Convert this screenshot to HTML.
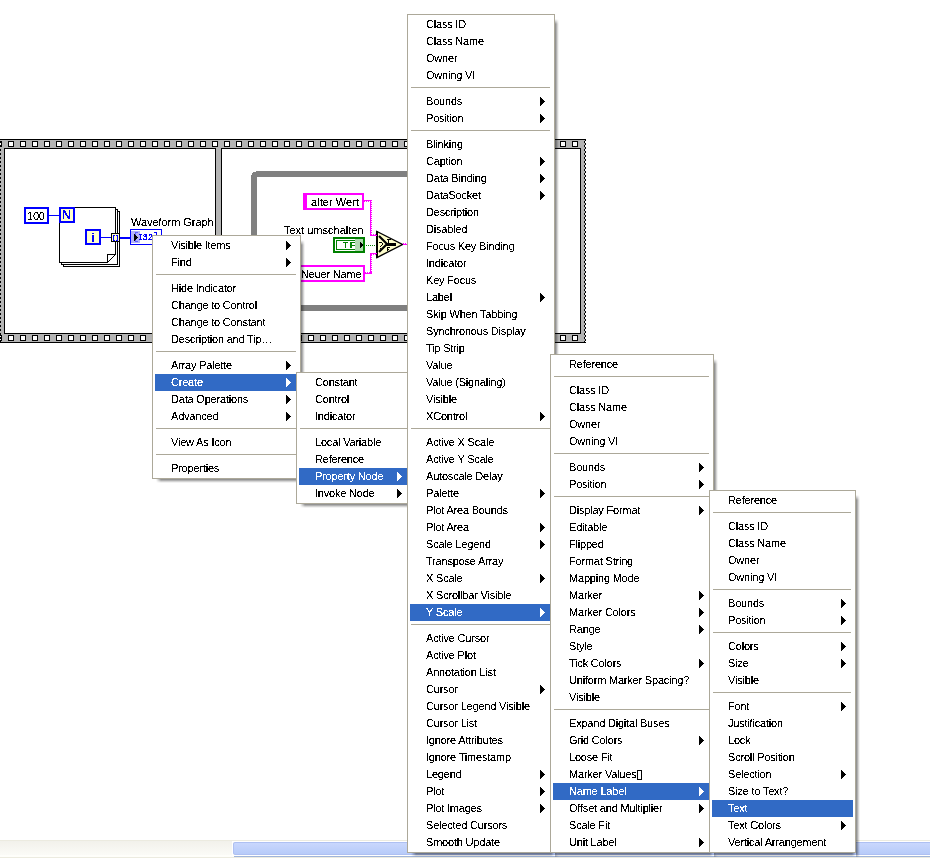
<!DOCTYPE html>
<html><head><meta charset="utf-8"><style>
html,body{margin:0;padding:0}
body{width:930px;height:858px;position:relative;overflow:hidden;background:#fff;font-family:"Liberation Sans",sans-serif;font-size:11px;color:#000}
.m{will-change:transform;position:absolute;box-sizing:border-box;background:#fff;border:1px solid #aca899;padding:1px 2px}
.i{position:relative;height:17px;line-height:17px;padding-left:16px;white-space:nowrap;letter-spacing:-0.2px}
.i.h{background:#316ac5;color:#fff}
.i b{position:absolute;right:7px;top:4px;width:5px;height:9px;color:#000;background:linear-gradient(currentColor,currentColor) 0 0/1px 9px no-repeat,linear-gradient(currentColor,currentColor) 1px 1px/1px 7px no-repeat,linear-gradient(currentColor,currentColor) 2px 2px/1px 5px no-repeat,linear-gradient(currentColor,currentColor) 3px 3px/1px 3px no-repeat,linear-gradient(currentColor,currentColor) 4px 4px/1px 1px no-repeat}
.i.h b{color:#fff}
.s{height:9px;position:relative}
.s:after{content:"";position:absolute;left:1px;right:2px;top:3px;height:1px;background:#aca899}
.sr{position:absolute;left:100%;top:4px;bottom:-5px;width:4px;margin-left:1px;background:linear-gradient(to right,rgba(0,0,0,.48),rgba(0,0,0,.32) 35%,rgba(0,0,0,.12) 70%,rgba(0,0,0,0));-webkit-mask-image:linear-gradient(to bottom,transparent,#000 5px,#000 calc(100% - 4px),rgba(0,0,0,.3))}
.sb{position:absolute;top:100%;left:3px;right:-1px;height:4px;margin-top:1px;background:linear-gradient(to bottom,rgba(0,0,0,.48),rgba(0,0,0,.32) 35%,rgba(0,0,0,.12) 70%,rgba(0,0,0,0));-webkit-mask-image:linear-gradient(to right,transparent,#000 5px,#000 calc(100% - 4px),transparent)}
.t{filter:url(#cr);position:absolute;line-height:17px;white-space:nowrap;letter-spacing:-0.2px}
.b{font-weight:bold}
.sc{position:absolute;left:0;top:840px;width:930px;height:18px;background:linear-gradient(to bottom,#ecebe0 0,#ecebe0 1px,#f2f1eb 1px,#fbfbf7 15px,#fefefa 15px,#fefefa 17px,#ecebe0 17px)}
.th{position:absolute;left:232px;top:1px;right:-3px;height:15px;border:1px solid #fff;border-right:0;box-sizing:border-box}
.th:before{content:"";position:absolute;left:0;top:0;right:0;bottom:0;border-radius:2px;background:linear-gradient(to bottom,#c9d7fd,#b7cbf9);border:1px solid #aec0f2}
.th:after{content:"";position:absolute;left:1px;right:0;top:14px;height:1px;background:#9fb4da}

.i span{filter:url(#cr)}

</style></head><body>
<svg width="0" height="0" style="position:absolute"><defs><filter id="cr" x="-5%" y="-20%" width="110%" height="140%"><feComponentTransfer><feFuncA type="discrete" tableValues="0 0 0 0 1 1 1 1 1"/></feComponentTransfer></filter></defs></svg>
<svg style="position:absolute;left:0;top:0" width="930" height="858" shape-rendering="crispEdges"><rect x="0" y="139" width="586" height="1" fill="#000"/><rect x="0" y="140" width="585" height="8" fill="#b4b4b4"/><rect x="0" y="342" width="586" height="1" fill="#000"/><rect x="0" y="334" width="585" height="8" fill="#b4b4b4"/><rect x="0" y="141" width="2" height="6" fill="#000"/><rect x="0" y="142" width="1" height="4" fill="#fff"/><rect x="0" y="335" width="2" height="6" fill="#000"/><rect x="0" y="336" width="1" height="4" fill="#fff"/><rect x="8" y="141" width="6" height="6" fill="#000"/><rect x="9" y="142" width="4" height="4" fill="#fff"/><rect x="8" y="335" width="6" height="6" fill="#000"/><rect x="9" y="336" width="4" height="4" fill="#fff"/><rect x="20" y="141" width="6" height="6" fill="#000"/><rect x="21" y="142" width="4" height="4" fill="#fff"/><rect x="20" y="335" width="6" height="6" fill="#000"/><rect x="21" y="336" width="4" height="4" fill="#fff"/><rect x="32" y="141" width="6" height="6" fill="#000"/><rect x="33" y="142" width="4" height="4" fill="#fff"/><rect x="32" y="335" width="6" height="6" fill="#000"/><rect x="33" y="336" width="4" height="4" fill="#fff"/><rect x="44" y="141" width="6" height="6" fill="#000"/><rect x="45" y="142" width="4" height="4" fill="#fff"/><rect x="44" y="335" width="6" height="6" fill="#000"/><rect x="45" y="336" width="4" height="4" fill="#fff"/><rect x="56" y="141" width="6" height="6" fill="#000"/><rect x="57" y="142" width="4" height="4" fill="#fff"/><rect x="56" y="335" width="6" height="6" fill="#000"/><rect x="57" y="336" width="4" height="4" fill="#fff"/><rect x="68" y="141" width="6" height="6" fill="#000"/><rect x="69" y="142" width="4" height="4" fill="#fff"/><rect x="68" y="335" width="6" height="6" fill="#000"/><rect x="69" y="336" width="4" height="4" fill="#fff"/><rect x="80" y="141" width="6" height="6" fill="#000"/><rect x="81" y="142" width="4" height="4" fill="#fff"/><rect x="80" y="335" width="6" height="6" fill="#000"/><rect x="81" y="336" width="4" height="4" fill="#fff"/><rect x="92" y="141" width="6" height="6" fill="#000"/><rect x="93" y="142" width="4" height="4" fill="#fff"/><rect x="92" y="335" width="6" height="6" fill="#000"/><rect x="93" y="336" width="4" height="4" fill="#fff"/><rect x="104" y="141" width="6" height="6" fill="#000"/><rect x="105" y="142" width="4" height="4" fill="#fff"/><rect x="104" y="335" width="6" height="6" fill="#000"/><rect x="105" y="336" width="4" height="4" fill="#fff"/><rect x="116" y="141" width="6" height="6" fill="#000"/><rect x="117" y="142" width="4" height="4" fill="#fff"/><rect x="116" y="335" width="6" height="6" fill="#000"/><rect x="117" y="336" width="4" height="4" fill="#fff"/><rect x="128" y="141" width="6" height="6" fill="#000"/><rect x="129" y="142" width="4" height="4" fill="#fff"/><rect x="128" y="335" width="6" height="6" fill="#000"/><rect x="129" y="336" width="4" height="4" fill="#fff"/><rect x="140" y="141" width="6" height="6" fill="#000"/><rect x="141" y="142" width="4" height="4" fill="#fff"/><rect x="140" y="335" width="6" height="6" fill="#000"/><rect x="141" y="336" width="4" height="4" fill="#fff"/><rect x="152" y="141" width="6" height="6" fill="#000"/><rect x="153" y="142" width="4" height="4" fill="#fff"/><rect x="152" y="335" width="6" height="6" fill="#000"/><rect x="153" y="336" width="4" height="4" fill="#fff"/><rect x="164" y="141" width="6" height="6" fill="#000"/><rect x="165" y="142" width="4" height="4" fill="#fff"/><rect x="164" y="335" width="6" height="6" fill="#000"/><rect x="165" y="336" width="4" height="4" fill="#fff"/><rect x="176" y="141" width="6" height="6" fill="#000"/><rect x="177" y="142" width="4" height="4" fill="#fff"/><rect x="176" y="335" width="6" height="6" fill="#000"/><rect x="177" y="336" width="4" height="4" fill="#fff"/><rect x="188" y="141" width="6" height="6" fill="#000"/><rect x="189" y="142" width="4" height="4" fill="#fff"/><rect x="188" y="335" width="6" height="6" fill="#000"/><rect x="189" y="336" width="4" height="4" fill="#fff"/><rect x="200" y="141" width="6" height="6" fill="#000"/><rect x="201" y="142" width="4" height="4" fill="#fff"/><rect x="200" y="335" width="6" height="6" fill="#000"/><rect x="201" y="336" width="4" height="4" fill="#fff"/><rect x="212" y="141" width="6" height="6" fill="#000"/><rect x="213" y="142" width="4" height="4" fill="#fff"/><rect x="212" y="335" width="6" height="6" fill="#000"/><rect x="213" y="336" width="4" height="4" fill="#fff"/><rect x="224" y="141" width="6" height="6" fill="#000"/><rect x="225" y="142" width="4" height="4" fill="#fff"/><rect x="224" y="335" width="6" height="6" fill="#000"/><rect x="225" y="336" width="4" height="4" fill="#fff"/><rect x="236" y="141" width="6" height="6" fill="#000"/><rect x="237" y="142" width="4" height="4" fill="#fff"/><rect x="236" y="335" width="6" height="6" fill="#000"/><rect x="237" y="336" width="4" height="4" fill="#fff"/><rect x="248" y="141" width="6" height="6" fill="#000"/><rect x="249" y="142" width="4" height="4" fill="#fff"/><rect x="248" y="335" width="6" height="6" fill="#000"/><rect x="249" y="336" width="4" height="4" fill="#fff"/><rect x="260" y="141" width="6" height="6" fill="#000"/><rect x="261" y="142" width="4" height="4" fill="#fff"/><rect x="260" y="335" width="6" height="6" fill="#000"/><rect x="261" y="336" width="4" height="4" fill="#fff"/><rect x="272" y="141" width="6" height="6" fill="#000"/><rect x="273" y="142" width="4" height="4" fill="#fff"/><rect x="272" y="335" width="6" height="6" fill="#000"/><rect x="273" y="336" width="4" height="4" fill="#fff"/><rect x="284" y="141" width="6" height="6" fill="#000"/><rect x="285" y="142" width="4" height="4" fill="#fff"/><rect x="284" y="335" width="6" height="6" fill="#000"/><rect x="285" y="336" width="4" height="4" fill="#fff"/><rect x="296" y="141" width="6" height="6" fill="#000"/><rect x="297" y="142" width="4" height="4" fill="#fff"/><rect x="296" y="335" width="6" height="6" fill="#000"/><rect x="297" y="336" width="4" height="4" fill="#fff"/><rect x="308" y="141" width="6" height="6" fill="#000"/><rect x="309" y="142" width="4" height="4" fill="#fff"/><rect x="308" y="335" width="6" height="6" fill="#000"/><rect x="309" y="336" width="4" height="4" fill="#fff"/><rect x="320" y="141" width="6" height="6" fill="#000"/><rect x="321" y="142" width="4" height="4" fill="#fff"/><rect x="320" y="335" width="6" height="6" fill="#000"/><rect x="321" y="336" width="4" height="4" fill="#fff"/><rect x="332" y="141" width="6" height="6" fill="#000"/><rect x="333" y="142" width="4" height="4" fill="#fff"/><rect x="332" y="335" width="6" height="6" fill="#000"/><rect x="333" y="336" width="4" height="4" fill="#fff"/><rect x="344" y="141" width="6" height="6" fill="#000"/><rect x="345" y="142" width="4" height="4" fill="#fff"/><rect x="344" y="335" width="6" height="6" fill="#000"/><rect x="345" y="336" width="4" height="4" fill="#fff"/><rect x="356" y="141" width="6" height="6" fill="#000"/><rect x="357" y="142" width="4" height="4" fill="#fff"/><rect x="356" y="335" width="6" height="6" fill="#000"/><rect x="357" y="336" width="4" height="4" fill="#fff"/><rect x="368" y="141" width="6" height="6" fill="#000"/><rect x="369" y="142" width="4" height="4" fill="#fff"/><rect x="368" y="335" width="6" height="6" fill="#000"/><rect x="369" y="336" width="4" height="4" fill="#fff"/><rect x="380" y="141" width="6" height="6" fill="#000"/><rect x="381" y="142" width="4" height="4" fill="#fff"/><rect x="380" y="335" width="6" height="6" fill="#000"/><rect x="381" y="336" width="4" height="4" fill="#fff"/><rect x="392" y="141" width="6" height="6" fill="#000"/><rect x="393" y="142" width="4" height="4" fill="#fff"/><rect x="392" y="335" width="6" height="6" fill="#000"/><rect x="393" y="336" width="4" height="4" fill="#fff"/><rect x="404" y="141" width="6" height="6" fill="#000"/><rect x="405" y="142" width="4" height="4" fill="#fff"/><rect x="404" y="335" width="6" height="6" fill="#000"/><rect x="405" y="336" width="4" height="4" fill="#fff"/><rect x="416" y="141" width="6" height="6" fill="#000"/><rect x="417" y="142" width="4" height="4" fill="#fff"/><rect x="416" y="335" width="6" height="6" fill="#000"/><rect x="417" y="336" width="4" height="4" fill="#fff"/><rect x="428" y="141" width="6" height="6" fill="#000"/><rect x="429" y="142" width="4" height="4" fill="#fff"/><rect x="428" y="335" width="6" height="6" fill="#000"/><rect x="429" y="336" width="4" height="4" fill="#fff"/><rect x="440" y="141" width="6" height="6" fill="#000"/><rect x="441" y="142" width="4" height="4" fill="#fff"/><rect x="440" y="335" width="6" height="6" fill="#000"/><rect x="441" y="336" width="4" height="4" fill="#fff"/><rect x="452" y="141" width="6" height="6" fill="#000"/><rect x="453" y="142" width="4" height="4" fill="#fff"/><rect x="452" y="335" width="6" height="6" fill="#000"/><rect x="453" y="336" width="4" height="4" fill="#fff"/><rect x="464" y="141" width="6" height="6" fill="#000"/><rect x="465" y="142" width="4" height="4" fill="#fff"/><rect x="464" y="335" width="6" height="6" fill="#000"/><rect x="465" y="336" width="4" height="4" fill="#fff"/><rect x="476" y="141" width="6" height="6" fill="#000"/><rect x="477" y="142" width="4" height="4" fill="#fff"/><rect x="476" y="335" width="6" height="6" fill="#000"/><rect x="477" y="336" width="4" height="4" fill="#fff"/><rect x="488" y="141" width="6" height="6" fill="#000"/><rect x="489" y="142" width="4" height="4" fill="#fff"/><rect x="488" y="335" width="6" height="6" fill="#000"/><rect x="489" y="336" width="4" height="4" fill="#fff"/><rect x="500" y="141" width="6" height="6" fill="#000"/><rect x="501" y="142" width="4" height="4" fill="#fff"/><rect x="500" y="335" width="6" height="6" fill="#000"/><rect x="501" y="336" width="4" height="4" fill="#fff"/><rect x="512" y="141" width="6" height="6" fill="#000"/><rect x="513" y="142" width="4" height="4" fill="#fff"/><rect x="512" y="335" width="6" height="6" fill="#000"/><rect x="513" y="336" width="4" height="4" fill="#fff"/><rect x="524" y="141" width="6" height="6" fill="#000"/><rect x="525" y="142" width="4" height="4" fill="#fff"/><rect x="524" y="335" width="6" height="6" fill="#000"/><rect x="525" y="336" width="4" height="4" fill="#fff"/><rect x="536" y="141" width="6" height="6" fill="#000"/><rect x="537" y="142" width="4" height="4" fill="#fff"/><rect x="536" y="335" width="6" height="6" fill="#000"/><rect x="537" y="336" width="4" height="4" fill="#fff"/><rect x="548" y="141" width="6" height="6" fill="#000"/><rect x="549" y="142" width="4" height="4" fill="#fff"/><rect x="548" y="335" width="6" height="6" fill="#000"/><rect x="549" y="336" width="4" height="4" fill="#fff"/><rect x="560" y="141" width="6" height="6" fill="#000"/><rect x="561" y="142" width="4" height="4" fill="#fff"/><rect x="560" y="335" width="6" height="6" fill="#000"/><rect x="561" y="336" width="4" height="4" fill="#fff"/><rect x="572" y="141" width="6" height="6" fill="#000"/><rect x="573" y="142" width="4" height="4" fill="#fff"/><rect x="572" y="335" width="6" height="6" fill="#000"/><rect x="573" y="336" width="4" height="4" fill="#fff"/><rect x="0" y="148" width="4" height="186" fill="#b4b4b4"/><rect x="0" y="141" width="1" height="2" fill="#000"/><rect x="0" y="145" width="1" height="2" fill="#000"/><rect x="0" y="149" width="1" height="2" fill="#000"/><rect x="0" y="153" width="1" height="2" fill="#000"/><rect x="0" y="157" width="1" height="2" fill="#000"/><rect x="0" y="161" width="1" height="2" fill="#000"/><rect x="0" y="165" width="1" height="2" fill="#000"/><rect x="0" y="169" width="1" height="2" fill="#000"/><rect x="0" y="173" width="1" height="2" fill="#000"/><rect x="0" y="177" width="1" height="2" fill="#000"/><rect x="0" y="181" width="1" height="2" fill="#000"/><rect x="0" y="185" width="1" height="2" fill="#000"/><rect x="0" y="189" width="1" height="2" fill="#000"/><rect x="0" y="193" width="1" height="2" fill="#000"/><rect x="0" y="197" width="1" height="2" fill="#000"/><rect x="0" y="201" width="1" height="2" fill="#000"/><rect x="0" y="205" width="1" height="2" fill="#000"/><rect x="0" y="209" width="1" height="2" fill="#000"/><rect x="0" y="213" width="1" height="2" fill="#000"/><rect x="0" y="217" width="1" height="2" fill="#000"/><rect x="0" y="221" width="1" height="2" fill="#000"/><rect x="0" y="225" width="1" height="2" fill="#000"/><rect x="0" y="229" width="1" height="2" fill="#000"/><rect x="0" y="233" width="1" height="2" fill="#000"/><rect x="0" y="237" width="1" height="2" fill="#000"/><rect x="0" y="241" width="1" height="2" fill="#000"/><rect x="0" y="245" width="1" height="2" fill="#000"/><rect x="0" y="249" width="1" height="2" fill="#000"/><rect x="0" y="253" width="1" height="2" fill="#000"/><rect x="0" y="257" width="1" height="2" fill="#000"/><rect x="0" y="261" width="1" height="2" fill="#000"/><rect x="0" y="265" width="1" height="2" fill="#000"/><rect x="0" y="269" width="1" height="2" fill="#000"/><rect x="0" y="273" width="1" height="2" fill="#000"/><rect x="0" y="277" width="1" height="2" fill="#000"/><rect x="0" y="281" width="1" height="2" fill="#000"/><rect x="0" y="285" width="1" height="2" fill="#000"/><rect x="0" y="289" width="1" height="2" fill="#000"/><rect x="0" y="293" width="1" height="2" fill="#000"/><rect x="0" y="297" width="1" height="2" fill="#000"/><rect x="0" y="301" width="1" height="2" fill="#000"/><rect x="0" y="305" width="1" height="2" fill="#000"/><rect x="0" y="309" width="1" height="2" fill="#000"/><rect x="0" y="313" width="1" height="2" fill="#000"/><rect x="0" y="317" width="1" height="2" fill="#000"/><rect x="0" y="321" width="1" height="2" fill="#000"/><rect x="0" y="325" width="1" height="2" fill="#000"/><rect x="0" y="329" width="1" height="2" fill="#000"/><rect x="0" y="333" width="1" height="2" fill="#000"/><rect x="0" y="337" width="1" height="2" fill="#000"/><rect x="0" y="341" width="1" height="2" fill="#000"/><rect x="581" y="148" width="4" height="186" fill="#b4b4b4"/><rect x="585" y="139" width="1" height="2" fill="#000"/><rect x="584" y="141" width="1" height="2" fill="#000"/><rect x="585" y="143" width="1" height="2" fill="#000"/><rect x="584" y="145" width="1" height="2" fill="#000"/><rect x="585" y="147" width="1" height="2" fill="#000"/><rect x="584" y="149" width="1" height="2" fill="#000"/><rect x="585" y="151" width="1" height="2" fill="#000"/><rect x="584" y="153" width="1" height="2" fill="#000"/><rect x="585" y="155" width="1" height="2" fill="#000"/><rect x="584" y="157" width="1" height="2" fill="#000"/><rect x="585" y="159" width="1" height="2" fill="#000"/><rect x="584" y="161" width="1" height="2" fill="#000"/><rect x="585" y="163" width="1" height="2" fill="#000"/><rect x="584" y="165" width="1" height="2" fill="#000"/><rect x="585" y="167" width="1" height="2" fill="#000"/><rect x="584" y="169" width="1" height="2" fill="#000"/><rect x="585" y="171" width="1" height="2" fill="#000"/><rect x="584" y="173" width="1" height="2" fill="#000"/><rect x="585" y="175" width="1" height="2" fill="#000"/><rect x="584" y="177" width="1" height="2" fill="#000"/><rect x="585" y="179" width="1" height="2" fill="#000"/><rect x="584" y="181" width="1" height="2" fill="#000"/><rect x="585" y="183" width="1" height="2" fill="#000"/><rect x="584" y="185" width="1" height="2" fill="#000"/><rect x="585" y="187" width="1" height="2" fill="#000"/><rect x="584" y="189" width="1" height="2" fill="#000"/><rect x="585" y="191" width="1" height="2" fill="#000"/><rect x="584" y="193" width="1" height="2" fill="#000"/><rect x="585" y="195" width="1" height="2" fill="#000"/><rect x="584" y="197" width="1" height="2" fill="#000"/><rect x="585" y="199" width="1" height="2" fill="#000"/><rect x="584" y="201" width="1" height="2" fill="#000"/><rect x="585" y="203" width="1" height="2" fill="#000"/><rect x="584" y="205" width="1" height="2" fill="#000"/><rect x="585" y="207" width="1" height="2" fill="#000"/><rect x="584" y="209" width="1" height="2" fill="#000"/><rect x="585" y="211" width="1" height="2" fill="#000"/><rect x="584" y="213" width="1" height="2" fill="#000"/><rect x="585" y="215" width="1" height="2" fill="#000"/><rect x="584" y="217" width="1" height="2" fill="#000"/><rect x="585" y="219" width="1" height="2" fill="#000"/><rect x="584" y="221" width="1" height="2" fill="#000"/><rect x="585" y="223" width="1" height="2" fill="#000"/><rect x="584" y="225" width="1" height="2" fill="#000"/><rect x="585" y="227" width="1" height="2" fill="#000"/><rect x="584" y="229" width="1" height="2" fill="#000"/><rect x="585" y="231" width="1" height="2" fill="#000"/><rect x="584" y="233" width="1" height="2" fill="#000"/><rect x="585" y="235" width="1" height="2" fill="#000"/><rect x="584" y="237" width="1" height="2" fill="#000"/><rect x="585" y="239" width="1" height="2" fill="#000"/><rect x="584" y="241" width="1" height="2" fill="#000"/><rect x="585" y="243" width="1" height="2" fill="#000"/><rect x="584" y="245" width="1" height="2" fill="#000"/><rect x="585" y="247" width="1" height="2" fill="#000"/><rect x="584" y="249" width="1" height="2" fill="#000"/><rect x="585" y="251" width="1" height="2" fill="#000"/><rect x="584" y="253" width="1" height="2" fill="#000"/><rect x="585" y="255" width="1" height="2" fill="#000"/><rect x="584" y="257" width="1" height="2" fill="#000"/><rect x="585" y="259" width="1" height="2" fill="#000"/><rect x="584" y="261" width="1" height="2" fill="#000"/><rect x="585" y="263" width="1" height="2" fill="#000"/><rect x="584" y="265" width="1" height="2" fill="#000"/><rect x="585" y="267" width="1" height="2" fill="#000"/><rect x="584" y="269" width="1" height="2" fill="#000"/><rect x="585" y="271" width="1" height="2" fill="#000"/><rect x="584" y="273" width="1" height="2" fill="#000"/><rect x="585" y="275" width="1" height="2" fill="#000"/><rect x="584" y="277" width="1" height="2" fill="#000"/><rect x="585" y="279" width="1" height="2" fill="#000"/><rect x="584" y="281" width="1" height="2" fill="#000"/><rect x="585" y="283" width="1" height="2" fill="#000"/><rect x="584" y="285" width="1" height="2" fill="#000"/><rect x="585" y="287" width="1" height="2" fill="#000"/><rect x="584" y="289" width="1" height="2" fill="#000"/><rect x="585" y="291" width="1" height="2" fill="#000"/><rect x="584" y="293" width="1" height="2" fill="#000"/><rect x="585" y="295" width="1" height="2" fill="#000"/><rect x="584" y="297" width="1" height="2" fill="#000"/><rect x="585" y="299" width="1" height="2" fill="#000"/><rect x="584" y="301" width="1" height="2" fill="#000"/><rect x="585" y="303" width="1" height="2" fill="#000"/><rect x="584" y="305" width="1" height="2" fill="#000"/><rect x="585" y="307" width="1" height="2" fill="#000"/><rect x="584" y="309" width="1" height="2" fill="#000"/><rect x="585" y="311" width="1" height="2" fill="#000"/><rect x="584" y="313" width="1" height="2" fill="#000"/><rect x="585" y="315" width="1" height="2" fill="#000"/><rect x="584" y="317" width="1" height="2" fill="#000"/><rect x="585" y="319" width="1" height="2" fill="#000"/><rect x="584" y="321" width="1" height="2" fill="#000"/><rect x="585" y="323" width="1" height="2" fill="#000"/><rect x="584" y="325" width="1" height="2" fill="#000"/><rect x="585" y="327" width="1" height="2" fill="#000"/><rect x="584" y="329" width="1" height="2" fill="#000"/><rect x="585" y="331" width="1" height="2" fill="#000"/><rect x="584" y="333" width="1" height="2" fill="#000"/><rect x="585" y="335" width="1" height="2" fill="#000"/><rect x="584" y="337" width="1" height="2" fill="#000"/><rect x="585" y="339" width="1" height="2" fill="#000"/><rect x="584" y="341" width="1" height="2" fill="#000"/><rect x="4" y="148" width="212" height="1" fill="#000"/><rect x="221" y="148" width="360" height="1" fill="#000"/><rect x="4" y="333" width="212" height="1" fill="#000"/><rect x="221" y="333" width="360" height="1" fill="#000"/><rect x="4" y="148" width="1" height="186" fill="#000"/><rect x="580" y="148" width="1" height="186" fill="#000"/><rect x="215" y="148" width="1" height="186" fill="#000"/><rect x="216" y="148" width="5" height="186" fill="#b4b4b4"/><rect x="221" y="148" width="1" height="186" fill="#000"/><rect x="216" y="148" width="5" height="1" fill="#b4b4b4"/><rect x="216" y="333" width="5" height="1" fill="#b4b4b4"/><rect x="256" y="171" width="160" height="1" fill="#808080"/><rect x="253" y="172" width="163" height="1" fill="#808080"/><rect x="252" y="173" width="164" height="2" fill="#808080"/><rect x="251" y="175" width="165" height="2" fill="#808080"/><rect x="251" y="177" width="6" height="128" fill="#808080"/><rect x="251" y="305" width="165" height="6" fill="#808080"/><rect x="63" y="211" width="57" height="56" fill="#000"/><rect x="64" y="212" width="55" height="54" fill="#fff"/><rect x="61" y="209" width="57" height="56" fill="#000"/><rect x="62" y="210" width="55" height="54" fill="#fff"/><rect x="59" y="207" width="57" height="56" fill="#000"/><rect x="60" y="208" width="55" height="54" fill="#fff"/><rect x="108" y="254" width="8" height="9" fill="#fff"/><rect x="115" y="254" width="1" height="1" fill="#000"/><rect x="107" y="254" width="1" height="9" fill="#000"/><rect x="107" y="254" width="9" height="1" fill="#000"/><rect x="115" y="254" width="1" height="1" fill="#000"/><rect x="114" y="255" width="1" height="1" fill="#000"/><rect x="113" y="256" width="1" height="1" fill="#000"/><rect x="112" y="257" width="1" height="1" fill="#000"/><rect x="111" y="258" width="1" height="1" fill="#000"/><rect x="110" y="259" width="1" height="1" fill="#000"/><rect x="109" y="260" width="1" height="1" fill="#000"/><rect x="108" y="261" width="1" height="1" fill="#000"/><rect x="107" y="262" width="1" height="1" fill="#000"/><rect x="24" y="207" width="25" height="17" fill="#0000ff"/><rect x="26" y="209" width="21" height="13" fill="#fff"/><rect x="49" y="215" width="10" height="1" fill="#0000ff"/><rect x="59" y="207" width="16" height="16" fill="#0000ff"/><rect x="61" y="209" width="12" height="12" fill="#ffffcc"/><rect x="85" y="229" width="16" height="16" fill="#0000ff"/><rect x="87" y="231" width="12" height="12" fill="#ffffcc"/><rect x="101" y="237" width="10" height="1" fill="#0000ff"/><rect x="111" y="233" width="9" height="9" fill="#000"/><rect x="112" y="234" width="7" height="7" fill="#ffffcc"/><rect x="113" y="235" width="1" height="6" fill="#0000ff"/><rect x="113" y="235" width="2" height="1" fill="#0000ff"/><rect x="113" y="240" width="2" height="1" fill="#0000ff"/><rect x="117" y="235" width="1" height="6" fill="#0000ff"/><rect x="116" y="235" width="2" height="1" fill="#0000ff"/><rect x="116" y="240" width="2" height="1" fill="#0000ff"/><rect x="63" y="210" width="1" height="9" fill="#0000ff"/><rect x="69" y="210" width="1" height="9" fill="#0000ff"/><rect x="63" y="210" width="2" height="1" fill="#0000ff"/><rect x="64" y="211" width="2" height="1" fill="#0000ff"/><rect x="64" y="212" width="2" height="1" fill="#0000ff"/><rect x="65" y="213" width="2" height="1" fill="#0000ff"/><rect x="65" y="214" width="2" height="1" fill="#0000ff"/><rect x="66" y="215" width="2" height="1" fill="#0000ff"/><rect x="67" y="216" width="2" height="1" fill="#0000ff"/><rect x="67" y="217" width="2" height="1" fill="#0000ff"/><rect x="68" y="218" width="2" height="1" fill="#0000ff"/><rect x="92" y="233" width="2" height="1" fill="#0000ff"/><rect x="92" y="235" width="2" height="7" fill="#0000ff"/><rect x="120" y="237" width="10" height="2" fill="#0000ff"/><rect x="130" y="229" width="32" height="16" fill="#0000ff"/><rect x="131" y="230" width="30" height="14" fill="#fff"/><rect x="131" y="231" width="9" height="12" fill="#b4b4fa"/><rect x="135" y="232" width="1" height="10" fill="#6060ff"/><rect x="135" y="232" width="3" height="1" fill="#6060ff"/><rect x="135" y="241" width="3" height="1" fill="#6060ff"/><rect x="156" y="232" width="1" height="10" fill="#0000ff"/><rect x="154" y="232" width="3" height="1" fill="#0000ff"/><rect x="154" y="241" width="3" height="1" fill="#0000ff"/><rect x="134" y="234" width="1" height="7" fill="#000"/><rect x="135" y="235" width="1" height="5" fill="#000"/><rect x="136" y="236" width="1" height="3" fill="#000"/><rect x="137" y="237" width="1" height="1" fill="#000"/><rect x="139" y="234" width="3" height="1" fill="#0000ff"/><rect x="139" y="239" width="3" height="1" fill="#0000ff"/><rect x="140" y="234" width="1" height="6" fill="#0000ff"/><rect x="141" y="235" width="0" height="0" fill="#0000ff"/><rect x="303" y="193" width="61" height="17" fill="#ff00ff"/><rect x="307" y="195" width="55" height="13" fill="#fff"/><rect x="296" y="265" width="69" height="17" fill="#ff00ff"/><rect x="299" y="267" width="64" height="13" fill="#fff"/><rect x="333" y="237" width="32" height="16" fill="#008000"/><rect x="335" y="239" width="28" height="12" fill="#fff"/><rect x="336" y="240" width="26" height="10" fill="#008000"/><rect x="337" y="241" width="24" height="8" fill="#fff"/><rect x="355" y="239" width="8" height="12" fill="#b0d8b0"/><polygon points="360,242 363,245 360,248" fill="#000"/><rect x="366" y="245" width="1" height="1" fill="#008000"/><rect x="368" y="245" width="1" height="1" fill="#008000"/><rect x="370" y="245" width="1" height="1" fill="#008000"/><rect x="372" y="245" width="1" height="1" fill="#008000"/><rect x="374" y="245" width="1" height="1" fill="#008000"/><polygon points="377,231.5 402.5,244.5 377,257.5" fill="#ffffcc" stroke="#000" stroke-width="1.4" shape-rendering="geometricPrecision"/><rect x="376" y="231" width="2" height="27" fill="#000"/><path d="M379 236 L387 244 L379 252" stroke="#000" stroke-width="2.2" fill="none" shape-rendering="geometricPrecision"/><rect x="386" y="243" width="10" height="3" fill="#000"/><rect x="387" y="239" width="4" height="1" fill="#000"/><rect x="388" y="239" width="1" height="4" fill="#000"/><rect x="387" y="247" width="1" height="4" fill="#000"/><rect x="387" y="247" width="3" height="1" fill="#000"/><rect x="387" y="249" width="2" height="1" fill="#000"/><rect x="379" y="242" width="3" height="1" fill="#000"/><rect x="382" y="243" width="1" height="2" fill="#000"/><rect x="381" y="245" width="1" height="1" fill="#000"/><rect x="380" y="246" width="1" height="1" fill="#000"/><rect x="380" y="248" width="1" height="1" fill="#000"/><rect x="364" y="200" width="8" height="1" fill="#ff00ff"/><rect x="364" y="201" width="1" height="1" fill="#ff00ff"/><rect x="366" y="201" width="1" height="1" fill="#ff00ff"/><rect x="368" y="201" width="1" height="1" fill="#ff00ff"/><rect x="370" y="201" width="1" height="1" fill="#ff00ff"/><rect x="370" y="200" width="1" height="36" fill="#ff00ff"/><rect x="371" y="200" width="1" height="1" fill="#ff00ff"/><rect x="371" y="202" width="1" height="1" fill="#ff00ff"/><rect x="371" y="204" width="1" height="1" fill="#ff00ff"/><rect x="371" y="206" width="1" height="1" fill="#ff00ff"/><rect x="371" y="208" width="1" height="1" fill="#ff00ff"/><rect x="371" y="210" width="1" height="1" fill="#ff00ff"/><rect x="371" y="212" width="1" height="1" fill="#ff00ff"/><rect x="371" y="214" width="1" height="1" fill="#ff00ff"/><rect x="371" y="216" width="1" height="1" fill="#ff00ff"/><rect x="371" y="218" width="1" height="1" fill="#ff00ff"/><rect x="371" y="220" width="1" height="1" fill="#ff00ff"/><rect x="371" y="222" width="1" height="1" fill="#ff00ff"/><rect x="371" y="224" width="1" height="1" fill="#ff00ff"/><rect x="371" y="226" width="1" height="1" fill="#ff00ff"/><rect x="371" y="228" width="1" height="1" fill="#ff00ff"/><rect x="371" y="230" width="1" height="1" fill="#ff00ff"/><rect x="371" y="232" width="1" height="1" fill="#ff00ff"/><rect x="371" y="234" width="1" height="1" fill="#ff00ff"/><rect x="371" y="235" width="6" height="1" fill="#ff00ff"/><rect x="371" y="234" width="1" height="1" fill="#ff00ff"/><rect x="373" y="234" width="1" height="1" fill="#ff00ff"/><rect x="375" y="234" width="1" height="1" fill="#ff00ff"/><rect x="365" y="273" width="7" height="1" fill="#ff00ff"/><rect x="365" y="272" width="1" height="1" fill="#ff00ff"/><rect x="367" y="272" width="1" height="1" fill="#ff00ff"/><rect x="369" y="272" width="1" height="1" fill="#ff00ff"/><rect x="371" y="272" width="1" height="1" fill="#ff00ff"/><rect x="370" y="253" width="1" height="21" fill="#ff00ff"/><rect x="371" y="253" width="1" height="1" fill="#ff00ff"/><rect x="371" y="255" width="1" height="1" fill="#ff00ff"/><rect x="371" y="257" width="1" height="1" fill="#ff00ff"/><rect x="371" y="259" width="1" height="1" fill="#ff00ff"/><rect x="371" y="261" width="1" height="1" fill="#ff00ff"/><rect x="371" y="263" width="1" height="1" fill="#ff00ff"/><rect x="371" y="265" width="1" height="1" fill="#ff00ff"/><rect x="371" y="267" width="1" height="1" fill="#ff00ff"/><rect x="371" y="269" width="1" height="1" fill="#ff00ff"/><rect x="371" y="271" width="1" height="1" fill="#ff00ff"/><rect x="371" y="273" width="1" height="1" fill="#ff00ff"/><rect x="371" y="253" width="6" height="1" fill="#ff00ff"/><rect x="371" y="254" width="1" height="1" fill="#ff00ff"/><rect x="373" y="254" width="1" height="1" fill="#ff00ff"/><rect x="375" y="254" width="1" height="1" fill="#ff00ff"/><rect x="403" y="244" width="5" height="1" fill="#ff00ff"/><rect x="403" y="243" width="1" height="1" fill="#ff00ff"/><rect x="405" y="243" width="1" height="1" fill="#ff00ff"/><rect x="407" y="243" width="1" height="1" fill="#ff00ff"/></svg>
<div class="t" style="left:27px;top:208px">100</div>
<div class="t" style="left:131px;top:214px;letter-spacing:-0.05px">Waveform Graph</div>
<div class="t b" style="left:142.5px;top:233px;color:#00f;font-size:9px;line-height:8px;letter-spacing:0.6px">32</div>
<div class="t" style="left:311px;top:194px;letter-spacing:0.05px">alter Wert</div>
<div class="t" style="left:284px;top:222px;letter-spacing:0">Text umschalten</div>
<div class="t" style="left:301px;top:266px">Neuer Name</div>
<div class="t b" style="left:343px;top:237px;color:#008000;font-size:8.5px;line-height:16px;letter-spacing:1.5px">TF</div>
<div class="sc"><div class="th"></div></div>

<div class="m" style="left:152px;top:235px;width:149px;height:244px">
<div class="i"><span>Visible Items</span><b></b></div>
<div class="i"><span>Find</span><b></b></div>
<div class="s"></div>
<div class="i"><span>Hide Indicator</span></div>
<div class="i"><span>Change to Control</span></div>
<div class="i"><span>Change to Constant</span></div>
<div class="i"><span>Description and Tip…</span></div>
<div class="s"></div>
<div class="i"><span>Array Palette</span><b></b></div>
<div class="i h"><span>Create</span><b></b></div>
<div class="i"><span>Data Operations</span><b></b></div>
<div class="i"><span>Advanced</span><b></b></div>
<div class="s"></div>
<div class="i"><span>View As Icon</span></div>
<div class="s"></div>
<div class="i"><span>Properties</span></div>
<i class="sr"></i><i class="sb"></i></div>
<div class="m" style="left:296px;top:372px;width:116px;height:132px">
<div class="i"><span>Constant</span></div>
<div class="i"><span>Control</span></div>
<div class="i"><span>Indicator</span></div>
<div class="s"></div>
<div class="i"><span>Local Variable</span></div>
<div class="i"><span>Reference</span></div>
<div class="i h"><span>Property Node</span><b></b></div>
<div class="i"><span>Invoke Node</span><b></b></div>
<i class="sr"></i><i class="sb"></i></div>
<div class="m" style="left:407px;top:14px;width:148px;height:839px">
<div class="i"><span>Class ID</span></div>
<div class="i"><span>Class Name</span></div>
<div class="i"><span>Owner</span></div>
<div class="i"><span>Owning VI</span></div>
<div class="s"></div>
<div class="i"><span>Bounds</span><b></b></div>
<div class="i"><span>Position</span><b></b></div>
<div class="s"></div>
<div class="i"><span>Blinking</span></div>
<div class="i"><span>Caption</span><b></b></div>
<div class="i"><span>Data Binding</span><b></b></div>
<div class="i"><span>DataSocket</span><b></b></div>
<div class="i"><span>Description</span></div>
<div class="i"><span>Disabled</span></div>
<div class="i"><span>Focus Key Binding</span></div>
<div class="i"><span>Indicator</span></div>
<div class="i"><span>Key Focus</span></div>
<div class="i"><span>Label</span><b></b></div>
<div class="i"><span>Skip When Tabbing</span></div>
<div class="i"><span>Synchronous Display</span></div>
<div class="i"><span>Tip Strip</span></div>
<div class="i"><span>Value</span></div>
<div class="i"><span>Value (Signaling)</span></div>
<div class="i"><span>Visible</span></div>
<div class="i"><span>XControl</span><b></b></div>
<div class="s"></div>
<div class="i"><span>Active X Scale</span></div>
<div class="i"><span>Active Y Scale</span></div>
<div class="i"><span>Autoscale Delay</span></div>
<div class="i"><span>Palette</span><b></b></div>
<div class="i"><span>Plot Area Bounds</span></div>
<div class="i"><span>Plot Area</span><b></b></div>
<div class="i"><span>Scale Legend</span><b></b></div>
<div class="i"><span>Transpose Array</span></div>
<div class="i"><span>X Scale</span><b></b></div>
<div class="i"><span>X Scrollbar Visible</span></div>
<div class="i h"><span>Y Scale</span><b></b></div>
<div class="s"></div>
<div class="i"><span>Active Cursor</span></div>
<div class="i"><span>Active Plot</span></div>
<div class="i"><span>Annotation List</span></div>
<div class="i"><span>Cursor</span><b></b></div>
<div class="i"><span>Cursor Legend Visible</span></div>
<div class="i"><span>Cursor List</span></div>
<div class="i"><span>Ignore Attributes</span></div>
<div class="i"><span>Ignore Timestamp</span></div>
<div class="i"><span>Legend</span><b></b></div>
<div class="i"><span>Plot</span><b></b></div>
<div class="i"><span>Plot Images</span><b></b></div>
<div class="i"><span>Selected Cursors</span></div>
<div class="i"><span>Smooth Update</span></div>
<i class="sr"></i><i class="sb"></i></div>
<div class="m" style="left:550px;top:354px;width:164px;height:499px">
<div class="i"><span>Reference</span></div>
<div class="s"></div>
<div class="i"><span>Class ID</span></div>
<div class="i"><span>Class Name</span></div>
<div class="i"><span>Owner</span></div>
<div class="i"><span>Owning VI</span></div>
<div class="s"></div>
<div class="i"><span>Bounds</span><b></b></div>
<div class="i"><span>Position</span><b></b></div>
<div class="s"></div>
<div class="i"><span>Display Format</span><b></b></div>
<div class="i"><span>Editable</span></div>
<div class="i"><span>Flipped</span></div>
<div class="i"><span>Format String</span></div>
<div class="i"><span>Mapping Mode</span></div>
<div class="i"><span>Marker</span><b></b></div>
<div class="i"><span>Marker Colors</span><b></b></div>
<div class="i"><span>Range</span><b></b></div>
<div class="i"><span>Style</span></div>
<div class="i"><span>Tick Colors</span><b></b></div>
<div class="i"><span>Uniform Marker Spacing?</span></div>
<div class="i"><span>Visible</span></div>
<div class="s"></div>
<div class="i"><span>Expand Digital Buses</span></div>
<div class="i"><span>Grid Colors</span><b></b></div>
<div class="i"><span>Loose Fit</span></div>
<div class="i"><span>Marker Values[]</span></div>
<div class="i h"><span>Name Label</span><b></b></div>
<div class="i"><span>Offset and Multiplier</span><b></b></div>
<div class="i"><span>Scale Fit</span></div>
<div class="i"><span>Unit Label</span><b></b></div>
<i class="sr"></i><i class="sb"></i></div>
<div class="m" style="left:709px;top:490px;width:147px;height:363px">
<div class="i"><span>Reference</span></div>
<div class="s"></div>
<div class="i"><span>Class ID</span></div>
<div class="i"><span>Class Name</span></div>
<div class="i"><span>Owner</span></div>
<div class="i"><span>Owning VI</span></div>
<div class="s"></div>
<div class="i"><span>Bounds</span><b></b></div>
<div class="i"><span>Position</span><b></b></div>
<div class="s"></div>
<div class="i"><span>Colors</span><b></b></div>
<div class="i"><span>Size</span><b></b></div>
<div class="i"><span>Visible</span></div>
<div class="s"></div>
<div class="i"><span>Font</span><b></b></div>
<div class="i"><span>Justification</span></div>
<div class="i"><span>Lock</span></div>
<div class="i"><span>Scroll Position</span></div>
<div class="i"><span>Selection</span><b></b></div>
<div class="i"><span>Size to Text?</span></div>
<div class="i h"><span>Text</span></div>
<div class="i"><span>Text Colors</span><b></b></div>
<div class="i"><span>Vertical Arrangement</span></div>
<i class="sr"></i><i class="sb"></i></div>
</body></html>
